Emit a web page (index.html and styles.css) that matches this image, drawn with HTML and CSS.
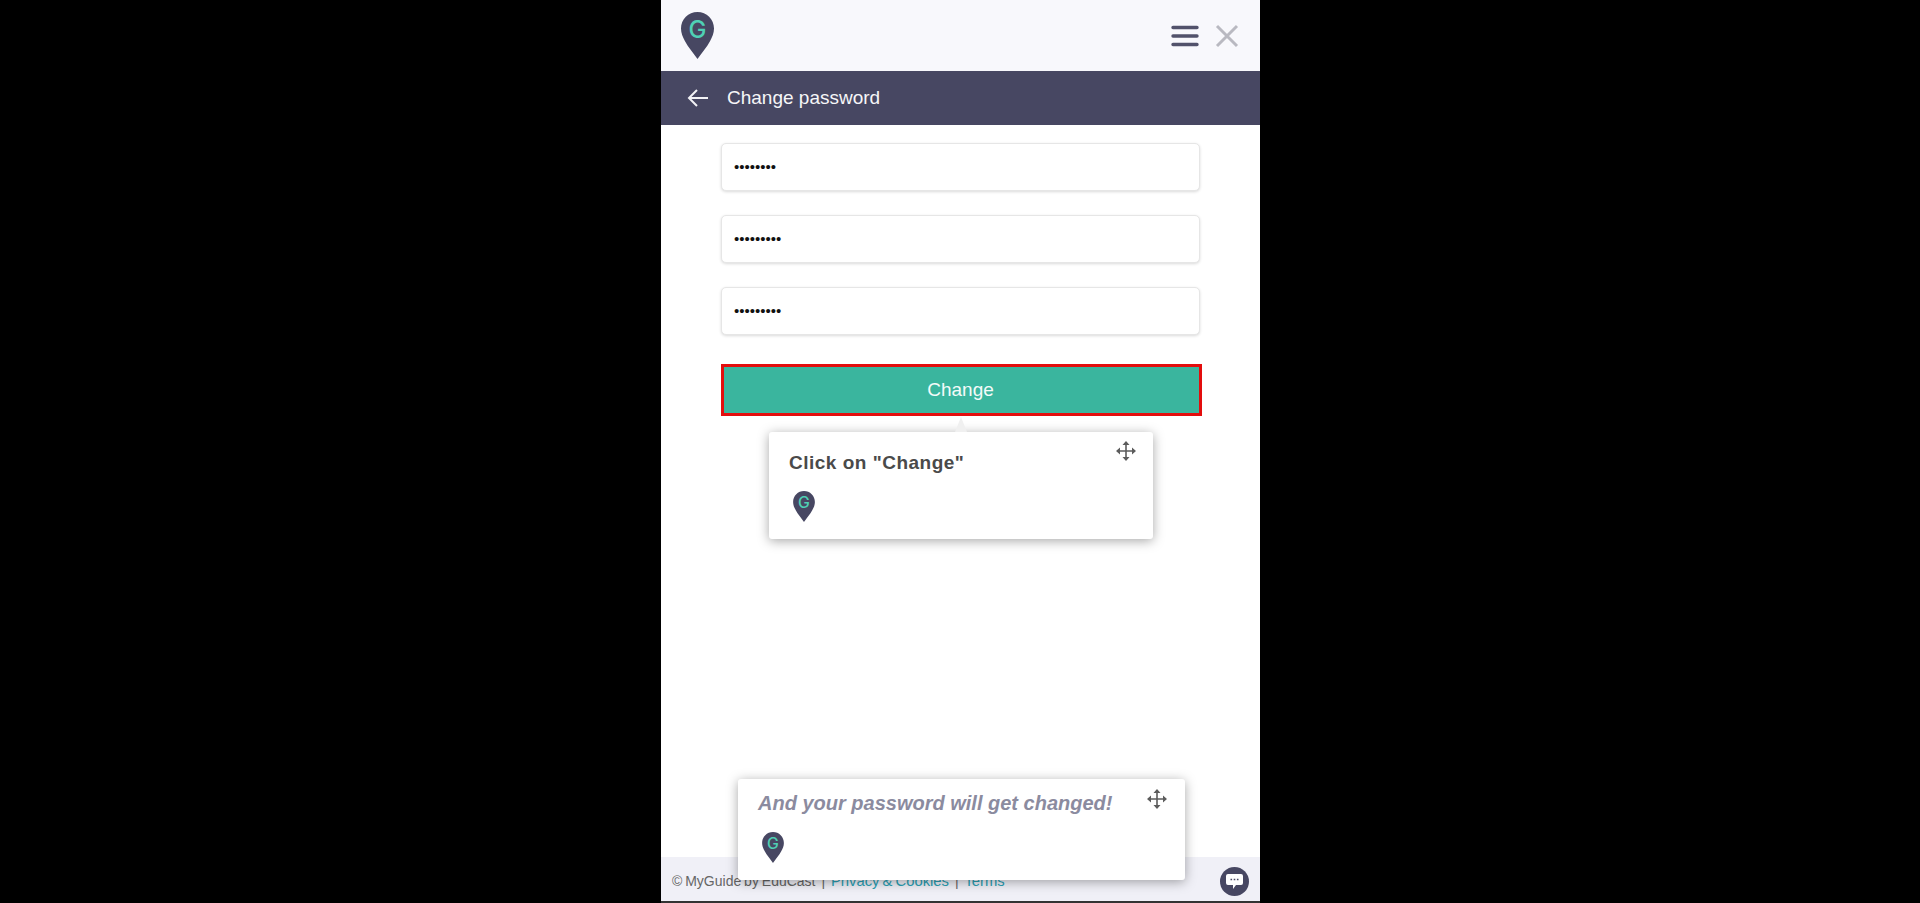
FILE: index.html
```html
<!DOCTYPE html>
<html lang="en">
<head>
    <meta charset="UTF-8">
    <title>Change password</title>
    <link rel="stylesheet" href="styles.css">
</head>
<body>
    <div class="panel">
        <header class="top">
            <svg class="logo" width="33" height="47" viewBox="0 0 33 47">
                <path class="pin-body" d="M16.5 0C7.4 0 0 7.4 0 16.5c0 4.5 1.7 8.5 4 12.700C7.200 35 12.200 41 16.500 47c4.300-6 9.300-12 12.500-17.800 2.300-4.200 4-8.200 4-12.700C33 7.400 25.600 0 16.500 0Z"/>
                <text class="pin-letter" x="16.500" y="26" text-anchor="middle">G</text>
            </svg>
            <div class="top-actions">
                <svg width="28" height="22" viewBox="0 0 28 22">
                    <path d="M2 2.500h24M2 11h24M2 19.500h24" stroke="#52526b" stroke-width="3.400" stroke-linecap="round"/>
                </svg>
                <svg width="24" height="24" viewBox="0 0 24 24">
                    <path d="M2 2l20 20M22 2L2 22" stroke="#b9b9c1" stroke-width="3"/>
                </svg>
            </div>
        </header>

        <div class="title-bar">
            <svg width="22" height="20" viewBox="0 0 22 20">
                <path d="M21 10H2M10 2l-8 8 8 8" stroke="#f2f2f5" stroke-width="2" fill="none"/>
            </svg>
            <h1>Change password</h1>
        </div>

        <main class="form">
            <input class="field" type="password" value="12345678" aria-label="Current password">
            <input class="field" type="password" value="123456789" aria-label="New password">
            <input class="field" type="password" value="123456789" aria-label="Confirm password">
            <button class="change-btn">Change</button>
        </main>

        <footer class="foot">
            <p>© MyGuide by EduCast <span class="sep">|</span> <a href="#">Privacy &amp; Cookies</a> <span class="sep">|</span> <a href="#">Terms</a></p>
            <span class="chat">
                <svg width="17" height="15" viewBox="0 0 17 15">
                    <path d="M2 0h13a2 2 0 0 1 2 2v7a2 2 0 0 1-2 2H10l-3 4v-4H2a2 2 0 0 1-2-2V2a2 2 0 0 1 2-2Z" fill="#fff"/>
                    <path d="M4.500 5.500h1.600M7.700 5.500h1.600M10.900 5.500h1.600" stroke="#474762" stroke-width="1.600"/>
                </svg>
            </span>
        </footer>

        <!-- guide tooltips -->
        <div class="tip tip-change">
            <h2>Click on "Change"</h2>
            <svg class="tip-move" width="20" height="20" viewBox="0 0 20 20">
                <path d="M10 1v18M1 10h18" stroke="#5c5c5c" stroke-width="1.600" fill="none"/>
                <path d="M10 0l3.500 4h-7ZM10 20l-3.500-4h7ZM0 10l4-3.500v7ZM20 10l-4 3.500v-7Z" fill="#5c5c5c"/>
            </svg>
            <svg class="tip-pin" width="22" height="31" viewBox="0 0 33 47">
                <path class="pin-body" d="M16.5 0C7.4 0 0 7.4 0 16.5c0 4.5 1.7 8.5 4 12.700C7.200 35 12.200 41 16.500 47c4.300-6 9.300-12 12.500-17.800 2.300-4.200 4-8.200 4-12.700C33 7.400 25.600 0 16.500 0Z"/>
                <text class="pin-letter" x="16.500" y="26" text-anchor="middle">G</text>
            </svg>
        </div>

        <div class="tip tip-done">
            <h2>And your password will get changed!</h2>
            <svg class="tip-move" width="20" height="20" viewBox="0 0 20 20">
                <path d="M10 1v18M1 10h18" stroke="#5c5c5c" stroke-width="1.600" fill="none"/>
                <path d="M10 0l3.500 4h-7ZM10 20l-3.500-4h7ZM0 10l4-3.500v7ZM20 10l-4 3.500v-7Z" fill="#5c5c5c"/>
            </svg>
            <svg class="tip-pin" width="22" height="31" viewBox="0 0 33 47">
                <path class="pin-body" d="M16.5 0C7.4 0 0 7.4 0 16.5c0 4.5 1.7 8.5 4 12.700C7.200 35 12.200 41 16.500 47c4.300-6 9.300-12 12.500-17.800 2.300-4.200 4-8.200 4-12.700C33 7.400 25.600 0 16.500 0Z"/>
                <text class="pin-letter" x="16.500" y="26" text-anchor="middle">G</text>
            </svg>
        </div>
    </div>
</body>
</html>
```

FILE: styles.css
```css
* {
    box-sizing: border-box;
    margin: 0;
    padding: 0;
}

body {
    background-color: #000;
    font-family: 'Liberation Sans', Arial, sans-serif;
    height: 903px;
    overflow: hidden;
}

.pin-body {
    fill: #474762;
}

.pin-letter {
    fill: #4fd1b5;
    font-family: 'Inter', sans-serif;
    font-size: 24px;
    font-weight: 500;
}

.panel {
    position: relative;
    display: flex;
    flex-direction: column;
    width: 599px;
    height: 903px;
    margin-left: 661px;
    background-color: #fff;
}

.top {
    display: flex;
    align-items: center;
    justify-content: space-between;
    height: 71px;
    padding: 0 21px 0 20px;
    background-color: #f8f8fc;
}

.top-actions {
    display: flex;
    align-items: center;
    gap: 16px;
}

.title-bar {
    display: flex;
    align-items: center;
    gap: 18px;
    height: 54px;
    padding-left: 26px;
    background-color: #474762;
    color: #f6f6f8;
}

.title-bar h1 {
    font-size: 19px;
    font-weight: 400;
}

.form {
    flex: 1;
    display: flex;
    flex-direction: column;
    padding: 18px 58px 0 60px;
}

.field {
    width: 479px;
    height: 48px;
    margin-bottom: 24px;
    padding: 0 12px 2px;
    border: 1px solid #e6e6e6;
    border-radius: 5px;
    box-shadow: 0 1px 3px rgba(0, 0, 0, 0.15);
    font-family: inherit;
    font-size: 15px;
    color: #111;
}

.change-btn {
    height: 52px;
    margin-top: 5px;
    padding-right: 2px;
    border: 3px solid #e30d0d;
    background-color: #3ab59e;
    color: #f4fbf9;
    font-family: inherit;
    font-size: 19px;
}

.foot {
    display: flex;
    align-items: center;
    justify-content: space-between;
    height: 46px;
    padding: 4px 11px 0;
    background-color: #f0f0f7;
    border-bottom: 2px solid #333;
    font-size: 14px;
    word-spacing: -1px;
    color: #666;
}

.foot a {
    color: #2aa1b5;
    font-size: 14.8px;
    text-decoration: none;
}

.sep {
    margin: 0 3px;
}

.chat {
    display: flex;
    align-items: center;
    justify-content: center;
    width: 29px;
    height: 29px;
    border-radius: 50%;
    background-color: #474762;
}

.tip {
    position: absolute;
    background-color: #fff;
    border-radius: 3px;
    box-shadow: 0 2px 12px rgba(0, 0, 0, 0.35);
}

.tip-change {
    left: 108px;
    top: 432px;
    width: 384px;
    height: 107px;
    padding: 20px;
}

/* arrow up to the button */
.tip-change::before {
    content: '';
    position: absolute;
    left: 186px;
    top: -15px;
    border-left: 6.5px solid transparent;
    border-right: 6.5px solid transparent;
    border-bottom: 15px solid #f0f0f0;
}

.tip-change h2 {
    font-size: 19px;
    letter-spacing: 0.5px;
    color: #4a4a4a;
}

.tip-done {
    left: 77px;
    top: 779px;
    width: 447px;
    height: 101px;
    padding: 13px 20px;
}

.tip-done h2 {
    font-size: 20px;
    font-style: italic;
    color: #8b8b9f;
}

.tip-move {
    position: absolute;
    top: 9px;
    right: 17px;
}

.tip-done .tip-move {
    right: 18px;
    top: 10px;
}

.tip-pin {
    display: block;
    margin-left: 4px;
}

.tip-change .tip-pin {
    margin-top: 17px;
}

.tip-done .tip-pin {
    margin-top: 17px;
}
```
